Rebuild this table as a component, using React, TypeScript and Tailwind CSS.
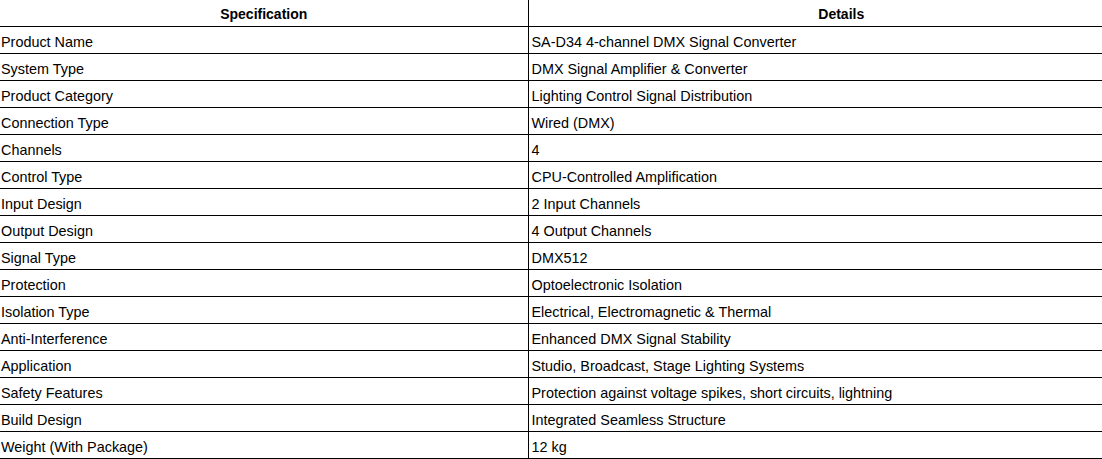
import React from "react";

const rows: [string, string][] = [
  ["Product Name", "SA-D34 4-channel DMX Signal Converter"],
  ["System Type", "DMX Signal Amplifier & Converter"],
  ["Product Category", "Lighting Control Signal Distribution"],
  ["Connection Type", "Wired (DMX)"],
  ["Channels", "4"],
  ["Control Type", "CPU-Controlled Amplification"],
  ["Input Design", "2 Input Channels"],
  ["Output Design", "4 Output Channels"],
  ["Signal Type", "DMX512"],
  ["Protection", "Optoelectronic Isolation"],
  ["Isolation Type", "Electrical, Electromagnetic & Thermal"],
  ["Anti-Interference", "Enhanced DMX Signal Stability"],
  ["Application", "Studio, Broadcast, Stage Lighting Systems"],
  ["Safety Features", "Protection against voltage spikes, short circuits, lightning"],
  ["Build Design", "Integrated Seamless Structure"],
  ["Weight (With Package)", "12 kg"],
];

const App = () => {
  return (
    <div className="w-[1102px] h-[459px] overflow-hidden bg-white font-['Liberation_Sans',Arial,sans-serif] text-[14.4px] leading-[16px] text-black">
      <table className="table-fixed border-collapse w-[1154px]">
        <colgroup>
          <col className="w-[528px]" />
          <col className="w-[626px]" />
        </colgroup>
        <thead>
          <tr className="h-[26px] border-b border-black">
            <th className="font-bold text-[14px] text-center border-r border-black p-0 pt-[6px] align-top">Specification</th>
            <th className="font-bold text-[14px] text-center p-0 pt-[6px] align-top">Details</th>
          </tr>
        </thead>
        <tbody>
          {rows.map(([spec, detail]) => (
            <tr key={spec} className="h-[27px] border-b border-black">
              <td className="border-r border-black pl-[1px] pt-[7px] align-top">{spec}</td>
              <td className="pl-[3px] pt-[7px] align-top">{detail}</td>
            </tr>
          ))}
        </tbody>
      </table>
    </div>
  );
};

export default App;
